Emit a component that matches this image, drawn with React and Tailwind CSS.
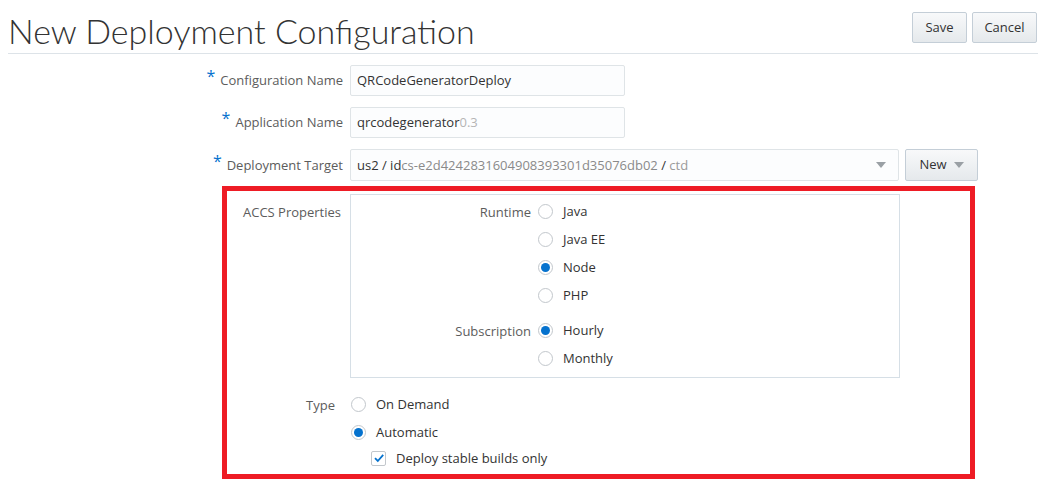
import React from 'react';

const font = { fontFamily: '"Open Sans", Lato, Arial, sans-serif' };
const titleFont = { fontFamily: 'Lato, "Open Sans", Arial, sans-serif' };

function Radio({ checked }) {
  return (
    <span className="flex h-[15px] w-[15px] shrink-0 items-center justify-center rounded-full border border-[#c2c7cc] bg-white">
      {checked && <span className="h-[9px] w-[9px] rounded-full bg-[#0572ce]" />}
    </span>
  );
}

function Checkbox() {
  return (
    <span className="flex h-[15px] w-[15px] shrink-0 items-center justify-center rounded-[2px] border border-[#c2c7cc] bg-white">
      <svg viewBox="0 0 12 12" className="h-[12px] w-[12px]">
        <path d="M2 6.2 L4.8 9 L10.2 2.8" fill="none" stroke="#0572ce" strokeWidth="1.8" />
      </svg>
    </span>
  );
}

function Caret({ color = '#9aa0a5' }) {
  return (
    <svg viewBox="0 0 10 6" className="h-[6px] w-[10px]">
      <path d="M0 0 H10 L5 6 Z" fill={color} />
    </svg>
  );
}

function Field({ label, children }) {
  return (
    <div className="flex items-center">
      <div className="w-[342px] pr-[7px] pt-[1px] text-right text-[13px] text-[#5c5c5c]">
        <span className="relative top-[-3px] mr-[5px] text-[16px] leading-none text-[#0572ce]">*</span>
        {label}
      </div>
      {children}
    </div>
  );
}

function Choice({ label, checked }) {
  return (
    <div className="flex h-[28px] items-center">
      <Radio checked={checked} />
      <span className="relative top-[1px] ml-[10px] text-[13px] text-[#333]">{label}</span>
    </div>
  );
}

function Button({ children, className = '' }) {
  return (
    <button
      type="button"
      className={`flex items-center justify-center rounded-[2px] border border-[#c4ced7] bg-gradient-to-b from-[#f8f9fa] to-[#e5e9ec] text-[13px] text-[#333] ${className}`}
    >
      {children}
    </button>
  );
}

export default function App() {
  return (
    <div className="min-h-[483px] bg-white" style={font}>
      <div className="mx-2 flex items-start justify-between border-b border-[#dde3e8]">
        <h1 className="pt-[11px] pb-[2px] text-[34px] font-light leading-[40px] text-[#333]" style={titleFont}>
          New Deployment Configuration
        </h1>
        <div className="mt-[12px] flex gap-[5px] pr-[1px]">
          <Button className="h-[31px] w-[55px]">Save</Button>
          <Button className="h-[31px] w-[65px]">Cancel</Button>
        </div>
      </div>

      <div className="mx-2 pt-[11px]">
        <Field label="Configuration Name">
          <div className="flex h-[31px] w-[275px] items-center rounded-[2px] border border-[#dfe4e7] bg-[#fcfdfe] px-[6px] pt-[1px] text-[13px] text-[#333]">
            QRCodeGeneratorDeploy
          </div>
        </Field>
        <div className="mt-[11px]">
          <Field label="Application Name">
            <div className="flex h-[31px] w-[275px] items-center rounded-[2px] border border-[#dfe4e7] bg-[#fcfdfe] px-[6px] pt-[1px] text-[13px] text-[#333]">
              qrcodegenerator<span className="text-[#b5b5b5]">0.3</span>
            </div>
          </Field>
        </div>
        <div className="mt-[11px]">
          <Field label="Deployment Target">
            <div className="flex h-[32px] w-[549px] items-center justify-between rounded-[2px] border border-[#dfe4e7] bg-[#fcfdfe] pl-[6px] pr-[12px] text-[13px] text-[#333]">
              <span className="truncate pt-[1px]">
                us2 / id<span className="text-[#8a8a8a]">cs-e2d4242831604908393301d35076db02</span> / <span className="text-[#9a9a9a]">ctd</span>
              </span>
              <Caret />
            </div>
            <Button className="ml-[6px] h-[32px] w-[73px] gap-[7px]">
              New
              <Caret />
            </Button>
          </Field>
        </div>

        <div className="ml-[214px] mt-[5px] w-[753px] border-[5px] border-[#ee1c25] pb-[4px] pt-[3px]">
          <div className="flex">
            <div className="w-[116px] whitespace-nowrap pt-[9px] pl-[16px] text-[13px] text-[#5c5c5c]">ACCS Properties</div>
            <div className="ml-[7px] w-[550px] border border-[#d6dfe6] pt-[2px] pb-[5px]">
              <div className="flex">
                <div className="w-[187px] pr-[7px] pt-[6px] text-right text-[13px] text-[#5c5c5c]">Runtime</div>
                <div>
                  <Choice label="Java" />
                  <Choice label="Java EE" />
                  <Choice label="Node" checked />
                  <Choice label="PHP" />
                </div>
              </div>
              <div className="mt-[7px] flex">
                <div className="w-[187px] pr-[7px] pt-[6px] text-right text-[13px] text-[#5c5c5c]">Subscription</div>
                <div>
                  <Choice label="Hourly" checked />
                  <Choice label="Monthly" />
                </div>
              </div>
            </div>
          </div>
          <div className="mt-[12px] flex">
            <div className="w-[116px] pr-[8px] pt-[6px] text-right text-[13px] text-[#5c5c5c]">Type</div>
            <div className="ml-[8px]">
              <Choice label="On Demand" />
              <Choice label="Automatic" checked />
              <div className="ml-[20px] flex h-[24px] items-center">
                <Checkbox />
                <span className="relative top-[1px] ml-[10px] text-[13px] text-[#333]">Deploy stable builds only</span>
              </div>
            </div>
          </div>
        </div>
      </div>
    </div>
  );
}
